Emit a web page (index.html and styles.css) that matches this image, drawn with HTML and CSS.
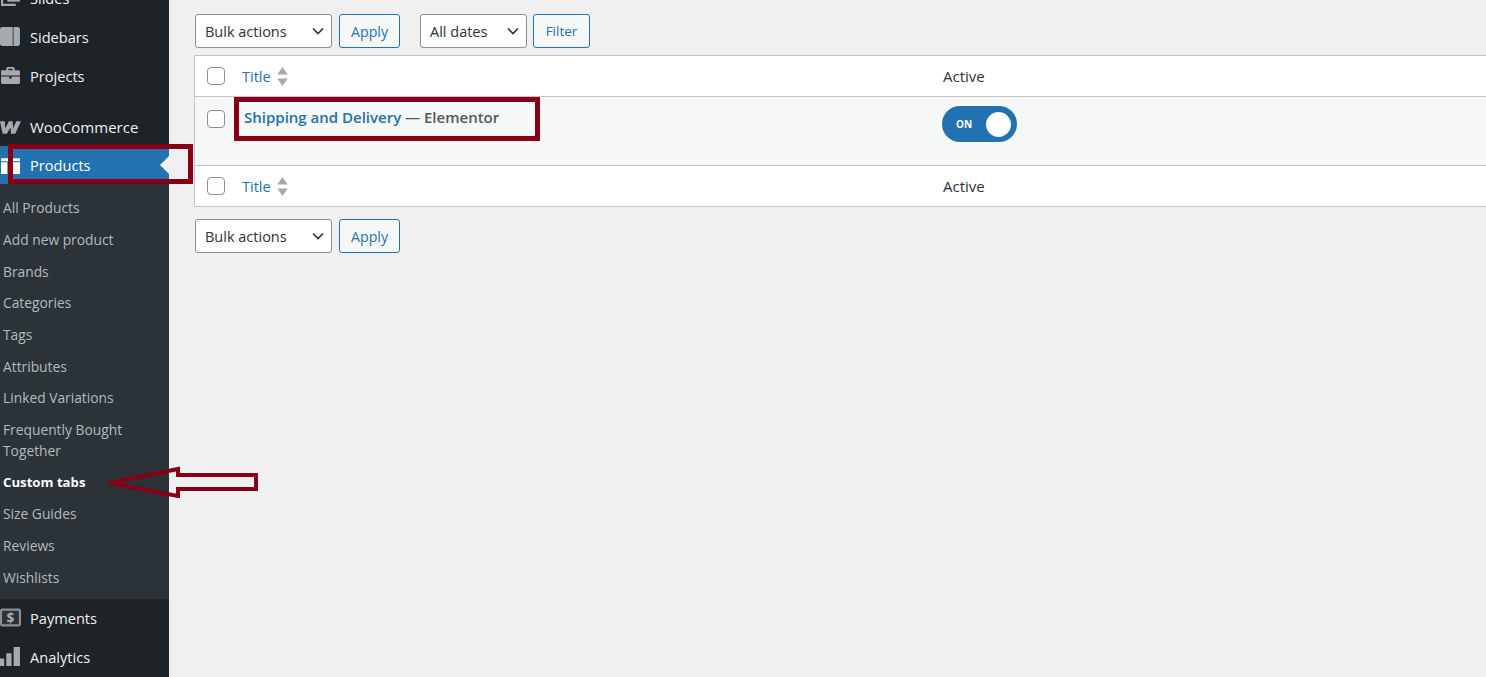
FILE: index.html
```html
<!DOCTYPE html>
<html lang="en">
<head>
<meta charset="utf-8">
<title>Custom tabs</title>
<link rel="stylesheet" href="styles.css">
</head>
<body>
<aside class="sidebar">
  <nav class="menu">
    <a class="item up"><svg class="ico" viewBox="0 0 20 20"><path d="M4 2h15v2H6v8H4zM1 7h2v9h12v2H1z" fill="#a7aaad"/><path d="M7 5h12v9H7z" fill="#a7aaad"/></svg><span>Slides</span></a>
    <a class="item up"><svg class="ico" viewBox="0 0 20 20"><rect x="0" y="1" width="19" height="18" rx="2" fill="#a7aaad"/><path d="M12 1h1v18h-1z" fill="#50405e"/></svg><span>Sidebars</span></a>
    <a class="item up gap-after"><svg class="ico" viewBox="0 0 20 20"><path d="M6 5V3.500Q6 2 7.500 2h5Q14 2 14 3.500V5h4q1 0 1 1v4H1V6q0-1 1-1zM8 3.500V5h4V3.500zM1 11h8v2h2v-2h8v6q0 1-1 1H2q-1 0-1-1z" fill="#a7aaad" fill-rule="evenodd"/></svg><span>Projects</span></a>
    <a class="item woo"><svg class="ico" viewBox="0 0 20 20"><path d="M0 4h4.500l.5 7 3.500-7H12l.5 7 3-7H20l-5.500 12H10.500L10 10l-3.500 6H2.500z" fill="#a7aaad"/></svg><span>WooCommerce</span></a>
    <a class="item current"><svg class="ico" viewBox="0 0 20 20"><path d="M1 3h18v3H1zM1 7h6v11H1zM9 7h10v11H9z" fill="#fff"/></svg><span>Products</span><i class="notch"></i></a>
    <ul class="sub">
      <li>All Products</li>
      <li>Add new product</li>
      <li>Brands</li>
      <li>Categories</li>
      <li>Tags</li>
      <li>Attributes</li>
      <li>Linked Variations</li>
      <li>Frequently Bought Together</li>
      <li class="on">Custom tabs</li>
      <li>Size Guides</li>
      <li>Reviews</li>
      <li>Wishlists</li>
    </ul>
    <a class="item up"><svg class="ico" viewBox="0 0 20 20"><rect x="1" y="2.500" width="18" height="15" rx="1" fill="#2c3338" stroke="#8c8f94" stroke-width="2"/><text x="10" y="15" class="dollar">$</text></svg><span>Payments</span></a>
    <a class="item up"><svg class="ico" viewBox="0 0 20 20"><path d="M0 12h4v7H0zM6 7h5v12H6zM13 1h6v18h-6z" fill="#a7aaad"/></svg><span>Analytics</span></a>
  </nav>
</aside>
<main class="content">
  <div class="actions top">
    <div class="select bulk">Bulk actions<svg class="chev" viewBox="0 0 12 8"><path d="M1 1.500l5 5 5-5" fill="none" stroke="#2c3338" stroke-width="1.600"/></svg></div>
    <button class="btn apply">Apply</button>
    <div class="select dates">All dates<svg class="chev" viewBox="0 0 12 8"><path d="M1 1.500l5 5 5-5" fill="none" stroke="#2c3338" stroke-width="1.600"/></svg></div>
    <button class="btn filter">Filter</button>
  </div>
  <div class="table">
    <div class="row head">
      <div class="cell-check"><span class="box"></span></div>
      <div class="cell-title"><a class="link">Title</a><svg class="sort" viewBox="0 0 10 18"><path d="M5 0l5 7H0z" fill="#a7aaad"/><path d="M0 11h10l-5 7z" fill="#a7aaad"/></svg></div>
      <div class="cell-active">Active</div>
    </div>
    <div class="row body">
      <div class="cell-check"><span class="box"></span></div>
      <div class="cell-title strong"><a class="link">Shipping and Delivery</a> — Elementor</div>
      <div class="cell-active"><div class="toggle"><span>ON</span><i></i></div></div>
    </div>
    <div class="row foot">
      <div class="cell-check"><span class="box"></span></div>
      <div class="cell-title"><a class="link">Title</a><svg class="sort" viewBox="0 0 10 18"><path d="M5 0l5 7H0z" fill="#a7aaad"/><path d="M0 11h10l-5 7z" fill="#a7aaad"/></svg></div>
      <div class="cell-active">Active</div>
    </div>
  </div>
  <div class="actions bottom">
    <div class="select bulk">Bulk actions<svg class="chev" viewBox="0 0 12 8"><path d="M1 1.500l5 5 5-5" fill="none" stroke="#2c3338" stroke-width="1.600"/></svg></div>
    <button class="btn apply">Apply</button>
  </div>
</main>
<div class="mark mark-products"></div>
<div class="mark mark-title"></div>
<svg class="arrow" viewBox="0 0 152 32"><path d="M3 17L72 3V9H150V23H72V30Z" fill="none" stroke="#880015" stroke-width="4"/></svg>
</body>
</html>
```
FILE: styles.css
```css
* { box-sizing: border-box; }
html, body { margin: 0; height: 677px; overflow: hidden; }
body {
  display: flex;
  background: #f0f0f1;
  font-family: "Open Sans", "Liberation Sans", sans-serif;
  font-size: 14.500px;
  color: #2c3338;
}
.sidebar { flex: 0 0 169px; height: 677px; background: #1d2327; overflow: hidden; }
.menu { margin-top: -21px; }
.item {
  position: relative;
  display: flex;
  align-items: center;
  height: 39px;
  color: #f0f0f1;
  font-size: 14.600px;
}
.up { padding-bottom: 2px; }
.item > span { margin-left: 9px; }
.ico { flex: 0 0 21px; width: 21px; height: 21px; }
.dollar { font: 700 13px "Open Sans", sans-serif; fill: #a7aaad; text-anchor: middle; }
.gap-after { margin-bottom: 12px; }
.woo { height: 38px; }
.woo > span { font-size: 15px; }
.current { background: #2271b1; color: #fff; height: 38px; }
.notch {
  position: absolute;
  right: 0;
  top: 10px;
  border: 9px solid transparent;
  border-left: 0;
  border-right-color: #f0f0f1;
}
.sub {
  list-style: none;
  margin: 0;
  padding: 8px 20px 6.500px 3px;
  background: #2c3338;
  color: #b4b9be;
  font-size: 13.800px;
  line-height: 21px;
}
.sub li { padding: 5.330px 0; }
.sub .on { color: #fff; font-weight: 700; font-size: 13.200px; }
.content { flex: 1; min-width: 0; padding: 14px 0 0 26px; }
.actions { display: flex; align-items: stretch; height: 34px; }
.select {
  display: flex;
  align-items: center;
  justify-content: space-between;
  padding: 0 7px 0 9px;
  background: #fff;
  border: 1px solid #8c8f94;
  border-radius: 3px;
  color: #2c3338;
  font-size: 14.500px;
}
.chev { width: 12px; height: 8px; }
.bulk { width: 137px; }
.dates { width: 107px; margin-left: 20px; }
.btn {
  padding: 0;
  background: #f6f7f7;
  border: 1px solid #2271b1;
  border-radius: 3px;
  color: #2271b1;
  font: inherit;
  font-size: 14.200px;
}
.apply { width: 61px; margin-left: 7px; }
.filter { width: 57px; margin-left: 6px; font-size: 13.500px; }
.table {
  margin: 7px 0 12px -1px;
  background: #fff;
  border: 1px solid #c3c4c7;
  border-right: 0;
}
.row { display: flex; }
.head { height: 41px; align-items: center; border-bottom: 1px solid #c3c4c7; }
.body { height: 69px; align-items: flex-start; background: #f6f7f7; border-bottom: 1px solid #c3c4c7; }
.foot { height: 40px; align-items: center; }
.cell-check { flex: 0 0 47px; padding-left: 12px; display: flex; }
.body .cell-check { padding-top: 13px; }
.box {
  width: 18px;
  height: 18px;
  background: #fff;
  border: 1px solid #8c8f94;
  border-radius: 4px;
}
.cell-title { flex: 0 0 700px; display: flex; align-items: center; gap: 6px; color: #50575e; }
.link { color: #2271b1; }
.sort { width: 11px; height: 19px; }
.strong { display: block; padding: 8px 0 0 2px; font-weight: 600; line-height: 24px; font-size: 15px; }
.cell-active { padding-left: 1px; font-size: 15px; }
.body .cell-active { padding: 9px 0 0; }
.toggle {
  display: flex;
  align-items: center;
  justify-content: space-between;
  width: 75px;
  height: 36px;
  padding: 0 6px 0 14px;
  background: #2271b1;
  border-radius: 18px;
  color: #fff;
  font-size: 10px;
  font-weight: 700;
}
.toggle i { width: 25px; height: 25px; background: #fff; border-radius: 50%; }
.mark { position: absolute; border: 5px solid #880015; }
.mark-products { left: 8px; top: 144px; width: 185px; height: 40px; }
.mark-title { left: 234px; top: 97px; width: 306px; height: 44px; }
.arrow { position: absolute; left: 106px; top: 466px; width: 152px; height: 32px; }
```
